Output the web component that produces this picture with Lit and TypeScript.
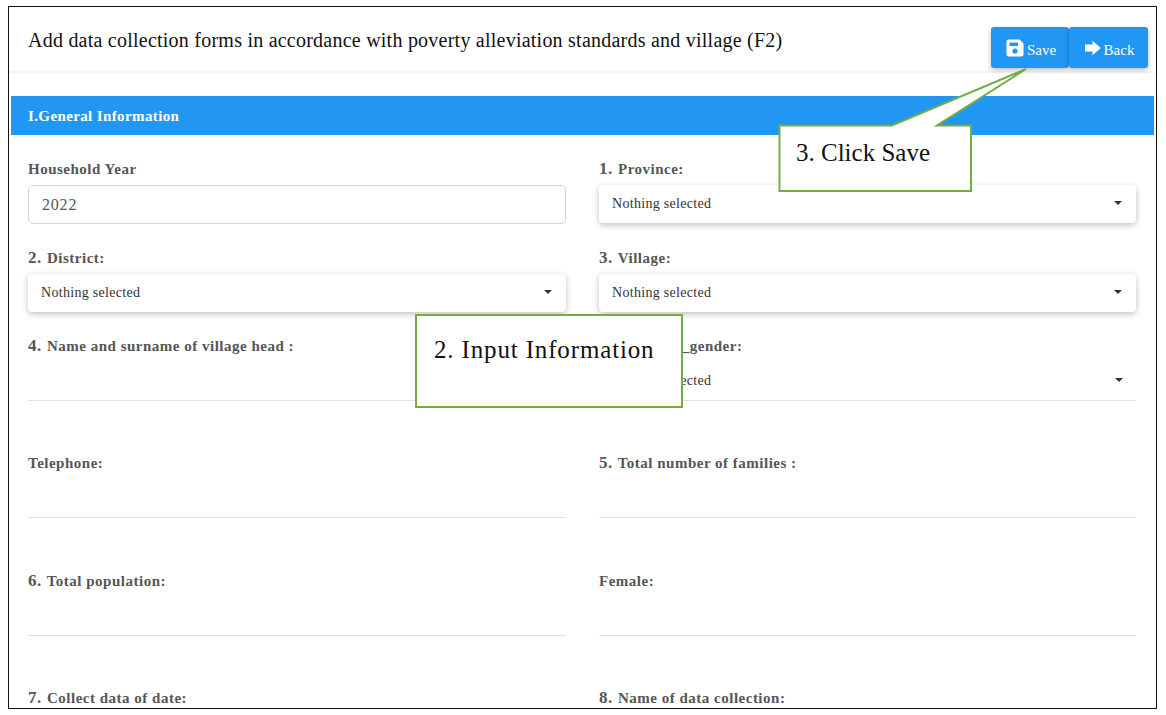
import { LitElement, html, css, svg } from "lit";
import { customElement } from "lit/decorators.js";

@customElement("app-root")
export class AppRoot extends LitElement {
  static styles = css`
    :host { display: block; width: 1166px; height: 715px; background: #fff; font-family: "Liberation Serif", serif; padding: 6px 9px 0 8px; box-sizing: border-box; position: relative; overflow: hidden; }
    .frame { height: 703px; border: 1px solid #111; box-sizing: border-box; overflow: hidden; padding-left: 2px; padding-right: 2px; background: #fff; }
    .head { height: 66px; box-sizing: border-box; border-bottom: 2px solid #f4f4f4; display: flex; justify-content: space-between; padding: 20px 8px 0 18px; margin: 0 -2px 0 -1px; }
    h1 { margin: 0; font-size: 20px; font-weight: 400; line-height: 26px; color: #111; letter-spacing: 0.235px; }
    .btns { display: flex; height: 41px; }
    .btn { background: #2196f3; color: #fff; font-size: 15px; display: flex; align-items: center; justify-content: center; gap: 3px; border-radius: 3px; box-shadow: 0 2px 5px rgba(0,0,0,.26); box-sizing: border-box; }
    .btn.save { width: 78px; padding: 6px 0 0 2px; }
    .btn.back { width: 79px; padding: 6px 0 0 2px; }
    .btn svg { display: block; margin-top: -5px; }
    .bar { margin-top: 23px; height: 39px; background: #2196f3; color: #fff; font-weight: 700; font-size: 15px; line-height: 41px; padding-left: 17px; letter-spacing: 0.38px; }
    .grid { display: grid; grid-template-columns: 538px 537px; column-gap: 33px; padding: 25px 17px 0 17px; grid-template-rows: 89px 88px 117px 118px 117px 40px; }
    .field { display: flex; flex-direction: column; }
    label { font-size: 15px; font-weight: 700; color: #555; line-height: 18px; letter-spacing: 0.5px; height: 18px; white-space: nowrap; }
    label b { font-size: 17px; line-height: 0; letter-spacing: 0.5px; margin-right: 1px; }
    label .tight { letter-spacing: 0; }
    .input { margin-top: 7px; height: 39px; border: 1px solid #d4d4d4; border-radius: 5px; box-sizing: border-box; font-size: 16px; line-height: 38px; color: #555; padding-left: 13px; letter-spacing: 0.8px; }
    .select { margin-top: 7px; height: 38px; border-radius: 4px; box-shadow: 0 2px 6px rgba(0,0,0,.25); box-sizing: border-box; padding: 0 14px 0 13px; display: flex; align-items: center; justify-content: space-between; font-size: 14px; letter-spacing: 0.3px; color: #333; background: #fff; }
    .caret { width: 0; height: 0; border-left: 4px solid transparent; border-right: 4px solid transparent; border-top: 4px solid #333; margin-top: -3px; }
    .line { height: 45px; border-bottom: 1px solid #e0e0e0; }
    .line.sel { padding: 7px 13px 0; height: 38px; display: flex; align-items: center; justify-content: space-between; font-size: 14px; letter-spacing: 0.3px; color: #333; }
    .overlay { position: absolute; left: 0; top: 0; width: 1166px; height: 715px; pointer-events: none; }
    .overlay text { font-family: "Liberation Serif", serif; font-size: 25px; fill: #111; }
    .overlay text.wide { letter-spacing: 0.85px; }
  `;

  private field(num: string, text: unknown, kind: string) {
    const lab = html`<label>${num ? html`<b>${num}</b> ` : ""}${text}</label>`;
    let body = html`<div class="line"></div>`;
    if (kind === "input") body = html`<div class="input">2022</div>`;
    if (kind === "select") body = html`<div class="select"><span>Nothing selected</span><span class="caret"></span></div>`;
    if (kind === "linesel") body = html`<div class="line sel"><span>Nothing selected</span><span class="caret"></span></div>`;
    if (kind === "none") body = html``;
    return html`<div class="field">${lab}${body}</div>`;
  }

  render() {
    return html`
      <div class="frame">
        <div class="head">
          <h1>Add data collection forms in accordance with poverty alleviation standards and village (F2)</h1>
          <div class="btns">
            <div class="btn save">
              <svg width="18" height="18" viewBox="0 0 18 18"><path fill="#fff" fill-rule="evenodd" d="M2.500 .5H13.500L17.500 4.500V15.500A2 2 0 0 1 15.500 17.500H2.500A2 2 0 0 1 .5 15.500V2.500A2 2 0 0 1 2.500 .5ZM3.500 3.500V7H12V3.500ZM9 9.500A2.600 2.600 0 1 0 9 14.700A2.600 2.600 0 0 0 9 9.500Z"/></svg>
              <span>Save</span>
            </div>
            <div class="btn back">
              <svg width="16" height="16" viewBox="0 0 16 16"><path fill="#fff" d="M0 4.500h7.500V.8L15.800 8 7.500 15.200v-3.700H0z"/></svg>
              <span>Back</span>
            </div>
          </div>
        </div>
        <div class="bar">I.General Information</div>
        <div class="grid">
          ${this.field("", "Household Year", "input")}
          ${this.field("1.", "Province:", "select")}
          ${this.field("2.", "District:", "select")}
          ${this.field("3.", "Village:", "select")}
          ${this.field("4.", "Name and surname of village head :", "line")}
          ${this.field("", html`<span class="tight">Village_head</span>_gender:`, "linesel")}
          ${this.field("", "Telephone:", "line")}
          ${this.field("5.", "Total number of families :", "line")}
          ${this.field("6.", "Total population:", "line")}
          ${this.field("", "Female:", "line")}
          ${this.field("7.", "Collect data of date:", "none")}
          ${this.field("8.", "Name of data collection:", "none")}
        </div>
      </div>
      <svg class="overlay" viewBox="0 0 1166 715">
        ${svg`<path d="M779.500 125.500H892L1026 69L937 125.500H971V191H779.500Z" fill="#fff" stroke="#70ad47" stroke-width="2"/>
        <text x="796" y="161">3. Click Save</text>
        <rect x="416" y="315" width="266" height="92" fill="#fff" stroke="#70ad47" stroke-width="2"/>
        <text class="wide" x="434" y="358">2. Input Information</text>`}
      </svg>
    `;
  }
}
